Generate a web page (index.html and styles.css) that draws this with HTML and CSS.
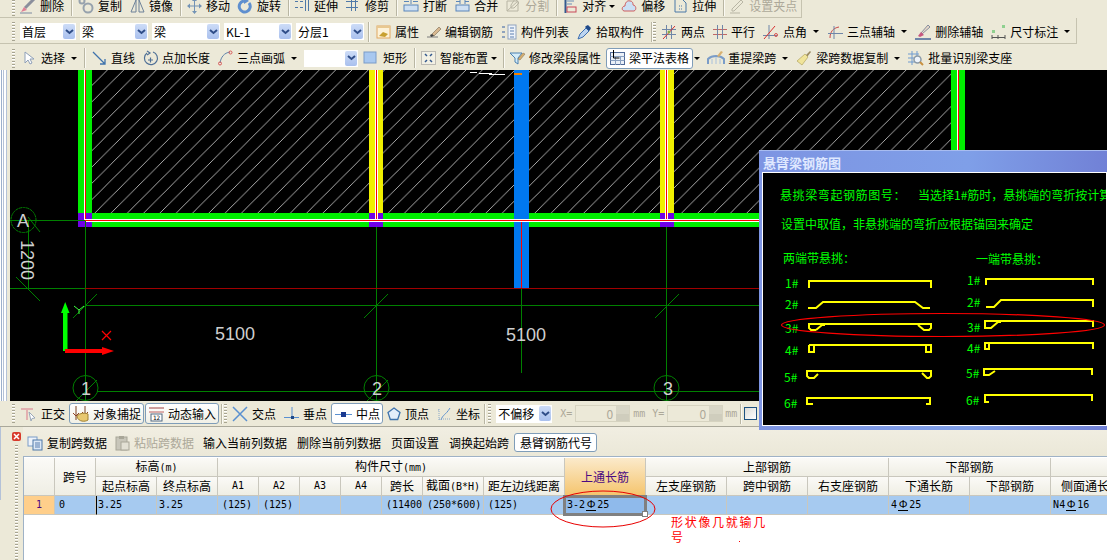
FILE: index.html
```html
<!DOCTYPE html>
<html lang="zh">
<head>
<meta charset="utf-8">
<title>梁平法表格</title>
<link rel="stylesheet" href="styles.css">
</head>
<body>
<div class="tb r1">
  <span class="grip"></span>
  <div class="it"><svg class="ic" width="16" height="16" viewBox="0 0 16 16"><path d="M5 10 14 1" stroke="#8a8f9c" stroke-width="3" fill="none"/><path d="M1 14l3-5 3 3z" fill="#e07f95"/><path d="M0 15h12" stroke="#7d8aa0" fill="none"/></svg>删除</div>
  <span class="sep"></span>
  <div class="it"><svg class="ic" width="16" height="16" viewBox="0 0 16 16" fill="none" stroke="#97a2ad"><circle cx="4" cy="3" r="2.5" stroke-width="2"/><circle cx="10" cy="10" r="4.5" stroke-width="2"/></svg>复制</div>
  <div class="it"><svg class="ic" width="15" height="16" viewBox="0 0 15 16" fill="none" stroke="#6c8098"><path d="M1 14 6 2v12zM9 2l5 12H9z"/></svg>镜像</div>
  <span class="sep"></span>
  <div class="it"><svg class="ic" width="15" height="16" viewBox="0 0 15 16" fill="#7393b5" stroke="#7393b5"><path d="M7.5 3v10M2 8h11" fill="none"/><path d="M7.5 0l2.5 3h-5zM7.5 16l-2.5-3h5zM0 8l3-2.500v5zM15 8l-3-2.500v5z" stroke="none"/></svg>移动</div>
  <div class="it"><svg class="ic" width="15" height="16" viewBox="0 0 15 16" fill="none"><path d="M6 3a5.500 5.500 0 1 0 5 2" stroke="#5f8fcf" stroke-width="3"/><path d="M6 -1v7l5-3z" fill="#5f8fcf"/></svg>旋转</div>
  <span class="sep"></span>
  <div class="it"><svg class="ic" width="15" height="16" viewBox="0 0 15 16" fill="none" stroke="#4e78a8"><path d="M0 3.500h3M5 3.500h3M0 9.500h3M5 9.500h3M10.500 0v13M13.500 0v13"/></svg>延伸</div>
  <div class="it"><svg class="ic" width="15" height="16" viewBox="0 0 15 16" fill="none" stroke="#4e78a8"><path d="M0 3.500h12M0 9.500h12M5.500 0v13M9.500 0v13"/></svg>修剪</div>
  <span class="sep"></span>
  <div class="it"><svg class="ic" width="16" height="16" viewBox="0 0 16 16" fill="none" stroke="#5a86ba"><path d="M1 3.500h5M10 3.500h5M1 10.500h14M8 1v5"/><rect x="1" y="7" width="14" height="6" fill="#cfe0f2"/></svg>打断</div>
  <div class="it"><svg class="ic" width="15" height="16" viewBox="0 0 15 16" fill="none" stroke="#5a86ba"><path d="M1 3.500h4M10 3.500h4M5 1v5M10 1v5"/><rect x="1" y="7" width="13" height="6" fill="#cfe0f2"/></svg>合并</div>
  <div class="it off"><svg class="ic" width="15" height="16" viewBox="0 0 15 16" fill="none" stroke="#b8b5a4"><path d="M1 13V3h11v10zM1 13 12 3M9 1l4 4-5 5H5V7z"/></svg>分割</div>
  <span class="sep"></span>
  <div class="it"><svg class="ic" width="15" height="16" viewBox="0 0 15 16" fill="none"><path d="M2.500 0v15" stroke="#33588e" stroke-width="2"/><path d="M4 3h7M4 6h5" stroke="#6a8fb8"/><rect x="4" y="9" width="9" height="5" stroke="#c84858"/></svg>对齐<span class="caret tight"></span></div>
  <div class="it"><svg class="ic" width="15" height="16" viewBox="0 0 15 16"><path d="M2 13c-3-1-2-5 1-5 0-3 2-6 5-5 3 0 3 3 3 4 3 0 4 5 1 6z" fill="#cbe0f4" stroke="#cf5f5f"/></svg>偏移</div>
  <div class="it"><svg class="ic" width="15" height="16" viewBox="0 0 15 16" fill="none" stroke="#4a78a8"><path d="M2 1h7l4 4v9H2z"/><path d="M6 8h4M6 11h4" stroke-dasharray="1 1"/></svg>拉伸</div>
  <span class="sep"></span>
  <div class="it off"><svg class="ic" width="15" height="16" viewBox="0 0 15 16" fill="none" stroke="#b8b5a4"><path d="M2 11 11 2l2 2-9 9H2zM0 15h10"/></svg>设置夹点</div>
</div>

<div class="tb r2">
  <span class="grip"></span>
  <div class="sel w56"><span class="sv">首层</span><span class="sb"><svg width="9" height="6" viewBox="0 0 9 6"><path d="M1 1l3.500 3L8 1" fill="none" stroke="#2f4d88" stroke-width="2"/></svg></span></div>
  <div class="sel w68"><span class="sv">梁</span><span class="sb"><svg width="9" height="6" viewBox="0 0 9 6"><path d="M1 1l3.500 3L8 1" fill="none" stroke="#2f4d88" stroke-width="2"/></svg></span></div>
  <div class="sel w68"><span class="sv">梁</span><span class="sb"><svg width="9" height="6" viewBox="0 0 9 6"><path d="M1 1l3.500 3L8 1" fill="none" stroke="#2f4d88" stroke-width="2"/></svg></span></div>
  <div class="sel w68"><span class="sv">KL-1</span><span class="sb"><svg width="9" height="6" viewBox="0 0 9 6"><path d="M1 1l3.500 3L8 1" fill="none" stroke="#2f4d88" stroke-width="2"/></svg></span></div>
  <div class="sel w68"><span class="sv">分层1</span><span class="sb"><svg width="9" height="6" viewBox="0 0 9 6"><path d="M1 1l3.500 3L8 1" fill="none" stroke="#2f4d88" stroke-width="2"/></svg></span></div>
  <span class="sep wide"></span>
  <div class="it"><svg class="ic" width="15" height="16" viewBox="0 0 15 16"><rect x="1" y="2" width="13" height="12" fill="#fdf2d8" stroke="#e0a860"/><path d="M1 2h13v2H1z" fill="#e8c890"/><path d="M3 12l4-4 5 2-3 3z" fill="#c8a030"/></svg>属性</div>
  <div class="it"><svg class="ic" width="14" height="16" viewBox="0 0 14 16"><path d="M5 10l7-7 2 2-7 7z" fill="#d8b890" stroke="#7a6a50" stroke-width=".6"/><path d="M0 13h11" stroke="#7a7a7a"/><path d="M3 11l2-1 2 2-3 1z" fill="#404040"/></svg>编辑钢筋</div>
  <div class="it"><svg class="ic" width="16" height="16" viewBox="0 0 16 16"><rect x="1" y="2" width="3" height="2" fill="#8fa3bd"/><rect x="1" y="7" width="3" height="2" fill="#8fa3bd"/><rect x="1" y="12" width="3" height="2" fill="#8fa3bd"/><rect x="7" y="1" width="8" height="14" fill="#eef3fa" stroke="#8fa3bd"/><path d="M9 4h4M9 7h4M9 10h4M9 13h4" stroke="#5a7fb0"/></svg>构件列表</div>
  <div class="it"><svg class="ic" width="15" height="16" viewBox="0 0 15 16"><path d="M1 15l2-5 6-6 3 3-6 6z" fill="#bcd4f0" stroke="#3c6eb0"/><path d="M9 2l2-1 3 3-1 2-1 1-4-4z" fill="#204a88"/></svg>拾取构件</div>
  <span class="sep tightb"></span>
  <span class="grip"></span>
  <div class="it"><svg class="ic" width="16" height="16" viewBox="0 0 16 16" fill="none"><path d="M1 5.500h14M1 10.500h14M5.500 1v14M10.500 1v14" stroke="#6f86a8"/><path d="M2 15 14 2" stroke="#d83030"/><circle cx="8" cy="8" r="1.500" fill="#88a848"/></svg>两点</div>
  <div class="it"><svg class="ic" width="14" height="16" viewBox="0 0 14 16" fill="none"><path d="M0 5.500h14M0 10.500h14" stroke="#c06868"/><path d="M4.500 1v14M9.500 1v14" stroke="#6f86a8"/></svg>平行</div>
  <div class="it"><svg class="ic" width="16" height="16" viewBox="0 0 16 16" fill="none"><path d="M0 11.500h14M6 1v14" stroke="#6f86a8"/><path d="M1 15 12 2" stroke="#d83030"/><circle cx="13" cy="11" r="1.500" stroke="#d85050"/></svg>点角<span class="caret"></span></div>
  <div class="it"><svg class="ic" width="16" height="16" viewBox="0 0 16 16" fill="none"><path d="M3 14C3 8 6 4 12 3" stroke="#c84848"/><path d="M1 9.500h15M7 2v13" stroke="#6f86a8"/></svg>三点辅轴<span class="caret"></span></div>
  <div class="it"><svg class="ic" width="16" height="16" viewBox="0 0 16 16"><path d="M6 9l7-8 2 2-8 7z" fill="#e8d8c8" stroke="#5a6a88" stroke-width=".7"/><path d="M3 12l3-4 3 3-4 2z" fill="#c85880"/><path d="M0 15h16" stroke="#6f86a8" stroke-width="2"/></svg>删除辅轴</div>
  <div class="it"><svg class="ic" width="15" height="16" viewBox="0 0 15 16" fill="none"><rect x="11" y="1" width="3" height="3" fill="#8fd08f"/><rect x="1" y="6" width="3" height="3" fill="#8fd08f"/><path d="M1 11v4M7 11v4M14 11v4M1 13.500h13" stroke="#555"/></svg>尺寸标注<span class="caret"></span></div>
</div>

<div class="tb r3">
  <span class="grip"></span>
  <div class="it"><svg class="ic" width="17" height="16" viewBox="0 0 17 16"><path d="M5 2v11l3-3 2 4 2-1-2-4h4z" fill="#fff" stroke="#8fa0b8"/></svg>选择<span class="caret"></span></div>
  <span class="sep"></span>
  <div class="it"><svg class="ic" width="16" height="16" viewBox="0 0 16 16" fill="none" stroke="#3f73ac" stroke-width="1.300"><path d="M2 2l12 12M9 14h5V9"/></svg>直线</div>
  <div class="it"><svg class="ic" width="15" height="16" viewBox="0 0 15 16" fill="none" stroke="#4f7096" stroke-width="1.200"><path d="M4 3a6.500 6.500 0 1 0 6-1"/><path d="M4 1l3 2-3 2M5 10h5M7.500 7.500v5"/></svg>点加长度</div>
  <div class="it"><svg class="ic" width="15" height="16" viewBox="0 0 15 16" fill="none"><path d="M2 13C3 7 6 3 12 2" stroke="#5f83ab"/><circle cx="12.500" cy="2.500" r="1.500" stroke="#d85858"/><circle cx="2" cy="13.500" r="1.500" stroke="#d85858"/></svg>三点画弧<span class="caret"></span></div>
  <div class="sel w54 gapped"><span class="sv"></span><span class="sb"><svg width="9" height="6" viewBox="0 0 9 6"><path d="M1 1l3.500 3L8 1" fill="none" stroke="#2f4d88" stroke-width="2"/></svg></span></div>
  <div class="it"><svg class="ic" width="16" height="16" viewBox="0 0 16 16"><rect x="1" y="2" width="12" height="11" fill="#a8c8f0" stroke="#7a9cc8"/></svg>矩形</div>
  <span class="sep"></span>
  <div class="it"><svg class="ic" width="15" height="16" viewBox="0 0 15 16" fill="none"><rect x=".5" y="1.500" width="14" height="13" fill="#f2f0e4" stroke="#8a8a8a" stroke-dasharray="1 1"/><path d="M4 4l2 2M11 4 9 6M4 12l2-2M11 12 9 10" stroke="#33588e" stroke-width="1.500"/></svg>智能布置<span class="caret tight"></span></div>
  <span class="sep"></span>
  <div class="it"><svg class="ic" width="15" height="16" viewBox="0 0 15 16"><path d="M0 3h12L8 8v6l-3-2V8z" fill="#d4ecf8" stroke="#4c80b0"/><path d="M8 9l5-6 2 1-5 6z" fill="#d8b070" stroke="#7a6a50" stroke-width=".5"/></svg>修改梁段属性</div>
  <div class="it btn act"><svg class="ic" width="15" height="16" viewBox="0 0 15 16" fill="none"><rect x=".5" y="2.500" width="14" height="12" fill="#eaf0f8" stroke="#506a98"/><path d="M.5 6.500h14M.5 10.500h14M5.500 6v9M10.500 6v9" stroke="#8aa0c0"/><path d="M3.500 0v8h6" stroke="#000"/></svg>梁平法表格</div>
  <span class="caret after"></span>
  <div class="it"><svg class="ic" width="16" height="16" viewBox="0 0 16 16" fill="none"><path d="M0 14V9C4 5 12 5 16 9v5" stroke="#7a9cc8" stroke-width="2"/><path d="M4 14V9M8 14V7M12 14V9" stroke="#a8c0dc"/><path d="M9 6l4-5 2 1-4 5z" fill="#d8b070"/></svg>重提梁跨<span class="caret"></span></div>
  <div class="it"><svg class="ic" width="16" height="16" viewBox="0 0 16 16"><path d="M10 5l4-4 1 1-4 5z" fill="#9a8a60"/><path d="M1 11l8-7 3 3-6 8z" fill="#f0e49a" stroke="#a89850" stroke-width=".6"/></svg>梁跨数据复制<span class="caret"></span></div>
  <div class="it"><svg class="ic" width="16" height="16" viewBox="0 0 16 16" fill="none"><path d="M0 4h11M0 8h9M0 12h7M4 1v14M9 1v6" stroke="#6f9bd0"/><circle cx="9.500" cy="9.500" r="3.500" fill="#eef4fb" stroke="#8a9aa8" stroke-width="1.500"/><path d="M12 12l3 3" stroke="#c89040" stroke-width="2"/></svg>批量识别梁支座</div>
</div>

<div class="work">
  <div class="edge"></div>
  <svg class="cad" width="1097" height="331" viewBox="10 70 1097 331">
    <defs>
      <pattern id="hatch" patternUnits="userSpaceOnUse" width="16.300" height="16.300" patternTransform="translate(14.400 0)">
        <path d="M0 16.300 16.300 0" stroke="#bdbdbd" stroke-width=".9" fill="none"/>
      </pattern>
    </defs>
    <rect x="10" y="70" width="1097" height="331" fill="#000"/>
    <rect x="92" y="70" width="859" height="143" fill="url(#hatch)"/>
    <g shape-rendering="crispEdges">
      <rect x="78" y="70" width="14" height="143" fill="#00ee00"/>
      <rect x="951" y="70" width="14" height="143" fill="#00ee00"/>
      <rect x="369" y="70" width="14" height="143" fill="#f0f000"/>
      <rect x="660" y="70" width="14" height="143" fill="#f0f000"/>
      <rect x="78" y="213" width="887" height="14" fill="#00ee00"/>
      <rect x="514" y="70" width="15" height="218" fill="#0078f0"/>
      <rect x="78" y="213" width="14" height="14" fill="#7000e8"/>
      <rect x="369" y="213" width="14" height="14" fill="#7000e8"/>
      <rect x="660" y="213" width="14" height="14" fill="#7000e8"/>
      <path d="M84.500 70v150M375.500 70v150M377.500 70v150M665.500 70v150M667.500 70v150M957.500 70v150" stroke="#fff" fill="none"/>
      <path d="M85.500 70v150M376.500 70v150M666.500 70v150M958.500 70v150M521.500 221v67" stroke="#f00" fill="none"/>
      <rect x="85" y="219" width="880" height="3" fill="#fff"/>
      <rect x="85" y="220" width="880" height="1" fill="#f00"/>
      <path d="M479 73.500h13M489 74.500h16M470 72.500h7" stroke="#fff" fill="none"/>
      <rect x="514" y="73" width="8" height="2" fill="#f08000"/>
      <path d="M10 220.500h75M10 288.500h75M85.500 221v180M376.500 227v174M666.500 227v174M521.500 288v85M28.500 221v67M85 305.500h675M97 391.500h663" stroke="#008000" fill="none"/>
      <path d="M85 288.500h675" stroke="#a00000" fill="none"/>
    </g>
    <g fill="none" stroke="#008000">
      <path d="M28 217 40 232M16 277l24 24M73 318l24-24M364 318l24-24M655 318l24-24M74 403l23-23M365 403l23-23"/>
      <circle cx="23.500" cy="220" r="12.500" stroke-dasharray="3 .6"/>
      <circle cx="85.500" cy="388" r="12.500"/>
      <circle cx="376.500" cy="388" r="12.500"/>
      <circle cx="666.500" cy="388" r="12.500"/>
    </g>
    <g class="cadt">
      <text x="17" y="227">A</text>
      <text x="215" y="340">5100</text>
      <text x="506" y="341">5100</text>
      <text x="81" y="395">1</text>
      <text x="372" y="395">2</text>
      <text x="663" y="395">3</text>
      <text transform="translate(21 240) rotate(90)">1200</text>
    </g>
    <path d="M74 306l5 4 5-4M79 310v4" fill="none" stroke="#40ff40"/>
    <path d="M102 331l9 9M111 331l-9 9" fill="none" stroke="#f00" stroke-width="1.200"/>
    <rect x="63" y="312" width="4.500" height="39" fill="#00ff00"/>
    <path d="M65.200 302 61 313h8.500z" fill="#00ff00"/>
    <rect x="65" y="349" width="38" height="4" fill="#f00"/>
    <path d="M114 351 102 347v8z" fill="#f00"/>
  </svg>
</div>

<div class="tb bar">
  <span class="grip"></span>
  <div class="it"><svg class="ic" width="17" height="16" viewBox="0 0 17 16"><path d="M1 2h12v2H8v10H6V4H1z" fill="#e3b0b0"/><path d="M9 6l6 6-3 .5-1 2.500z" fill="#fff" stroke="#9aa8b8"/></svg>正交</div>
  <div class="it btn"><svg class="ic" width="16" height="16" viewBox="0 0 16 16"><path d="M3 0v14M12 0v8" stroke="#7a4020" fill="none"/><path d="M0 7l3 3 3-3M9 6l3 3 3-3" stroke="#904020" fill="none"/><path d="M4 11c0-3 7-5 11-3v6c-3 2-9 2-11-3z" fill="#e8c870" stroke="#a08030"/></svg>对象捕捉</div>
  <div class="it btn next"><svg class="ic" width="15" height="16" viewBox="0 0 15 16" fill="none"><path d="M0 2h15" stroke="#a04040"/><path d="M0 6h15" stroke="#c06060"/><rect x="2" y="8" width="11" height="7" fill="#fff" stroke="#506880"/><text class="ict" x="4" y="14">12</text></svg>动态输入</div>
  <span class="sep sb1"></span>
  <span class="grip"></span>
  <div class="it"><svg class="ic" width="16" height="16" viewBox="0 0 16 16" fill="none" stroke="#5a90d0" stroke-width="1.500"><path d="M1 1l14 14M15 1 1 15"/></svg>交点</div>
  <div class="it"><svg class="ic" width="15" height="16" viewBox="0 0 15 16" fill="none" stroke="#5a90d0"><path d="M0 11.500h15M8 1v10"/><rect x="7" y="10" width="3" height="3" fill="#204a88" stroke="none"/></svg>垂点</div>
  <div class="it btn on"><svg class="ic" width="17" height="16" viewBox="0 0 17 16" fill="none"><path d="M0 8.500h17" stroke="#5a90d0"/><rect x="6" y="6" width="5" height="5" fill="#1a3a90"/></svg>中点</div>
  <div class="it"><svg class="ic" width="14" height="16" viewBox="0 0 14 16"><path d="M7 2l6 4.500-2.300 7H3.300L1 6.500z" fill="#e4eefa" stroke="#3f73ac" stroke-width="1.300"/></svg>顶点</div>
  <div class="it"><svg class="ic" width="15" height="16" viewBox="0 0 15 16" fill="none"><path d="M4 14C6 8 8 10 13 2" stroke="#5a90d0"/><path d="M1 4h2M2 3v11M2 13h12" stroke="#8aa8c8" stroke-dasharray="1 1"/></svg>坐标</div>
  <span class="sep flush"></span>
  <span class="grip"></span>
  <div class="sel w56 offs"><span class="sv">不偏移</span><span class="sb"><svg width="9" height="6" viewBox="0 0 9 6"><path d="M1 1l3.500 3L8 1" fill="none" stroke="#2f4d88" stroke-width="2"/></svg></span></div>
  <span class="lab">X=</span>
  <div class="num w55"><span class="nv">0</span><span class="spin"></span></div>
  <span class="mm">mm</span>
  <span class="lab ly">Y=</span>
  <div class="num w56b"><span class="nv">0</span><span class="spin"></span></div>
  <span class="mm m2">mm</span>
  <span class="sep sc"></span>
  <span class="chk"></span>
</div>

<div class="panel">
  <div class="rail">
    <span class="close"><svg width="9" height="9" viewBox="0 0 9 9"><path d="M2 2l5 5M7 2 2 7" stroke="#fff" stroke-width="1.500"/></svg></span>
    <span class="rgrip"></span>
  </div>
  <div class="pmain">
    <div class="ptb">
      <div class="it"><svg class="ic" width="16" height="16" viewBox="0 0 16 16"><rect x="1" y="2" width="9" height="9" fill="#eef3fa" stroke="#7a9cc8"/><rect x="6" y="5" width="9" height="10" fill="#dce8f6" stroke="#4f78a8"/><path d="M8 8h5M8 10h5M8 12h5" stroke="#5a7fb0"/></svg>复制跨数据</div>
      <div class="it off"><svg class="ic" width="15" height="16" viewBox="0 0 15 16"><rect x="1" y="2" width="11" height="13" fill="#c8c6ba" stroke="#a8a698"/><rect x="4" y="1" width="5" height="3" fill="#a8a698"/><rect x="6" y="7" width="8" height="8" fill="#e2e0d4" stroke="#a8a698"/></svg>粘贴跨数据</div>
      <div class="plain">输入当前列数据</div>
      <div class="plain">删除当前列数据</div>
      <div class="plain">页面设置</div>
      <div class="plain">调换起始跨</div>
      <div class="cmd">悬臂钢筋代号</div>
    </div>
    <div class="grid">
      <table>
        <colgroup><col class="c31"><col class="c41"><col class="c61"><col class="c61"><col class="c41"><col class="c41"><col class="c41"><col class="c41"><col class="c41"><col class="c61"><col class="c81"><col class="c81"><col class="c81"><col class="c81"><col class="c81"><col class="c81"><col class="c81"><col class="c81"></colgroup>
        <thead>
          <tr class="h1">
            <th rowspan="2"></th>
            <th rowspan="2">跨号</th>
            <th colspan="2">标高<span class="m">(m)</span></th>
            <th colspan="7">构件尺寸<span class="m">(mm)</span></th>
            <th rowspan="2" class="cur">上通长筋</th>
            <th colspan="3">上部钢筋</th>
            <th colspan="2">下部钢筋</th>
            <th></th>
          </tr>
          <tr class="h2">
            <th>起点标高</th><th>终点标高</th>
            <th class="m">A1</th><th class="m">A2</th><th class="m">A3</th><th class="m">A4</th>
            <th>跨长</th><th>截面<span class="m">(B*H)</span></th><th>距左边线距离</th>
            <th>左支座钢筋</th><th>跨中钢筋</th><th>右支座钢筋</th>
            <th>下通长筋</th><th>下部钢筋</th><th class="lf">侧面通长筋</th>
          </tr>
        </thead>
        <tbody>
          <tr class="d">
            <td class="rowno">1</td>
            <td class="pad">0</td>
            <td class="bl">3.25</td>
            <td>3.25</td>
            <td class="pad">(125)</td>
            <td class="pad">(125)</td>
            <td></td>
            <td></td>
            <td class="pad">(11400)</td>
            <td class="pad">(250*600)</td>
            <td class="pad">(125)</td>
            <td class="active">3-2<span class="rb">Φ</span>25<span class="handle"></span></td>
            <td></td><td></td><td></td>
            <td>4<span class="rb">Φ</span>25</td>
            <td></td>
            <td>N4<span class="rb">Φ</span>16</td>
          </tr>
        </tbody>
      </table>
    </div>
  </div>
</div>

<div class="dlg">
  <div class="dlg-title">悬臂梁钢筋图</div>
  <svg class="dlg-body" width="343" height="252" viewBox="764 173 343 252">
    <rect x="764" y="173" width="343" height="252" fill="#000"/>
    <g class="gt">
      <text class="wide-t" x="781" y="200">悬挑梁弯起钢筋图号：</text>
      <text x="919" y="200">当选择1#筋时，悬挑端的弯折按计算</text>
      <text x="782" y="229">设置中取值，非悬挑端的弯折应根据锚固来确定</text>
      <text x="784" y="263">两端带悬挑：</text>
      <text x="977" y="264">一端带悬挑：</text>
      <text x="786" y="288">1#</text><text x="968" y="285">1#</text>
      <text x="786" y="309">2#</text><text x="968" y="307">2#</text>
      <text x="786" y="333">3#</text><text x="968" y="332">3#</text>
      <text x="786" y="355">4#</text><text x="968" y="353">4#</text>
      <text x="785" y="382">5#</text><text x="967" y="378">5#</text>
      <text x="785" y="408">6#</text><text x="967" y="405">6#</text>
    </g>
    <g fill="none" stroke="#ffff00" stroke-width="2">
      <path d="M810 288v-7h122v7"/>
      <path d="M809 308h8l7-6h92l8 6h7"/>
      <path d="M817 330h-5l-2-2v-4h122v4l-2 2h-5l-6-5M817 330l6-5h3"/>
      <path d="M810 345h122v7h-5v-7M810 345v7h5v-7"/>
      <path d="M819 374l-4 4h-5l-2-2v-5h124v5l-2 2h-2l-5-5"/>
      <path d="M814 404h-6v-6h123v6h-4"/>
      <path d="M987 285v-6h107v6"/>
      <path d="M987 307h8l7-7h92v7"/>
      <path d="M1094 327v-6H986v7h6l7-6h3"/>
      <path d="M1094 349v-6H986v6h4v-6"/>
      <path d="M996 371l-6 4h-5v-6h108v6"/>
      <path d="M990 402h-4v-7h107v6"/>
    </g>
    <ellipse cx="944" cy="325" rx="161.500" ry="11.500" fill="none" stroke="#f00" stroke-width="1.200"/>
  </svg>
</div>

<svg class="ring" width="106" height="40" viewBox="0 0 106 40"><ellipse cx="53" cy="19" rx="52" ry="18" fill="none" stroke="#e80000"/></svg>
<div class="note">形状像几就输几号</div>
<span class="speck"></span>
</body>
</html>
```

FILE: styles.css
```css
* { box-sizing: border-box; }
html, body { margin: 0; height: 100%; }
body {
  position: relative;
  width: 1107px;
  height: 560px;
  overflow: hidden;
  display: flex;
  flex-direction: column;
  background: #ece9d8;
  color: #000;
  font: 12px/16px "Noto Sans CJK SC", "Liberation Sans", sans-serif;
}

/* toolbars */
.tb { display: flex; align-items: center; flex: none; padding-left: 11px; background: #ece9d8; white-space: nowrap; }
.r1 { width: 802px; height: 18px; padding-bottom: 5px; border-right: 1px solid #c6c3b0; border-bottom: 1px solid #c6c3b0; }
.r2 { width: 1077px; height: 26px; padding-top: 2px; border-bottom: 1px solid #c6c3b0; border-right: 1px solid #c6c3b0; }
.r3 { width: 1107px; height: 26px; padding-top: 2px; }
.bar { width: 1107px; height: 26px; border-bottom: 1px solid #aaa89a; }

.grip {
  flex: none;
  width: 3px;
  height: 19px;
  margin: 0 1px;
  background: repeating-linear-gradient(#a7a491 0 1px, #fff 1px 2px, transparent 2px 3px);
}
.sep { flex: none; width: 1px; height: 20px; margin: 0 2px 0 3px; background: #b9b6a3; box-shadow: 1px 0 0 #fbfaf3; }
.sep.wide { margin: 0 3px 0 4px; }
.sep.tightb { margin: 0 0 0 3px; }
.sep.sb1 { margin: 0 1px 0 2px; }
.sep.flush { margin: 0 2px 0 0; }
.sep.sc { margin: 0 3px 0 2px; }

.it { flex: none; display: flex; align-items: center; gap: 4px; padding: 0 4px; height: 16px; }
.ic { flex: none; display: block; overflow: visible; }
.off { color: #aca899; }

.caret { flex: none; width: 0; height: 0; margin-left: 2px; border-style: solid; border-width: 3px 3px 0; border-color: #000 transparent transparent; }
.caret.tight { margin: 0 -1px; }
.caret.after { margin: 0 4px 0 1px; }

/* active toggle buttons */
.btn {
  height: 21px;
  padding: 0 2px 0 3px;
  border: 1px solid #7f9db9;
  border-radius: 3px;
  background: linear-gradient(#fff, #f1f0e6);
}
.btn.next { margin-left: 1px; }
.btn.act { margin-left: 1px; padding-right: 3px; background: #fff; }
.btn.on { padding-right: 2px; background: #fff; }

/* combos */
.sel { flex: none; display: flex; align-items: center; height: 17px; margin-left: 4px; background: #fff; }
.w56 { width: 56px; }
.w68 { width: 68px; }
.w54 { width: 54px; }
.sel.gapped { margin: 0 1px 0 3px; }
.sel.offs { margin: 0 8px 0 4px; height: 18px; }
.sv { flex: 1; padding-left: 2px; overflow: hidden; }
.sb {
  flex: none;
  display: flex;
  align-items: center;
  justify-content: center;
  width: 12px;
  height: 15px;
  margin-right: 1px;
  border-radius: 2px;
  background: linear-gradient(#cddcf7, #a9c0ee);
}

/* status fields */
.lab, .mm { flex: none; font-family: "DejaVu Sans Mono", monospace; font-size: 10px; color: #aca899; }
.lab { width: 15px; }
.lab.ly { margin-left: 7px; }
.mm { width: 12px; margin-left: 3px; white-space: nowrap; }
.mm.m2 { width: 13px; margin-left: 2px; }
.num { flex: none; display: flex; height: 17px; border: 1px solid #d6d3c0; background: #ece9d8; color: #aca899; }
.w55 { width: 55px; }
.w56b { width: 56px; }
.nv { flex: 1; padding-right: 3px; text-align: right; line-height: 15px; }
.spin {
  flex: none;
  width: 13px;
  background: linear-gradient(to bottom, #d8d6c6 0 50%, #cfcdbd 50% 100%);
}
.chk { flex: none; width: 13px; height: 13px; border: 1px solid #1c5180; background: linear-gradient(135deg, #dcdcd7, #fff); }

/* drawing */
.work { flex: none; display: flex; height: 331px; }
.edge {
  flex: none;
  width: 10px;
  background: linear-gradient(90deg, #fff 0 1px, #9db0cc 1px 2px, #fff 2px 3px, #b4c2d8 3px 4px, #fff 4px 6px, #b4c2d8 6px 7px, #ece9d8 7px 10px);
}
.cad { flex: none; display: block; }
.cadt text { font: 18px "Liberation Sans", sans-serif; fill: #cfcfcf; }
.ict { font: 6px "DejaVu Sans Mono", monospace; fill: #000; }

/* lower panel */
.panel { flex: 1; display: flex; min-height: 0; }
.rail {
  position: relative;
  flex: none;
  width: 23px;
  display: flex;
  flex-direction: column;
  align-items: center;
  padding: 5px 0 0 9px;
  background: linear-gradient(90deg, #b4c2d8 0 1px, #ece9d8 1px) no-repeat 0 0 / 3px 73px, #ece9d8;
}
.close { display: block; width: 9px; height: 9px; margin-left: 1px; background: #d83a2c; border-radius: 2px; line-height: 0; }
.rgrip { flex: 1; width: 3px; margin-top: 4px; background: repeating-linear-gradient(#a7a491 0 1px, #fff 1px 2px, transparent 2px 3px); }
.pmain { flex: 1; min-width: 0; display: flex; flex-direction: column; }
.ptb {
  flex: none;
  display: flex;
  align-items: center;
  height: 30px;
  padding-top: 2px;
  border-bottom: 1px solid #9fb2c6;
  background: linear-gradient(#f1eee2, #ebe8d8);
  white-space: nowrap;
}
.plain { flex: none; padding: 0 5px; }
.cmd { flex: none; height: 19px; padding: 0 4px 0 5px; border: 1px solid #7f9db9; border-radius: 3px; background: #fff; line-height: 17px; }

/* table */
.grid { flex: 1; padding-top: 1px; overflow: hidden; border-left: 1px solid #9fb2c6; background: #fff; }
table { width: 1108px; border-collapse: separate; border-spacing: 0; table-layout: fixed; }
.c31 { width: 31px; }
.c41 { width: 41px; }
.c61 { width: 61px; }
.c81 { width: 81px; }
th, td { padding: 0; border-right: 1px solid #c9c7bd; border-bottom: 1px solid #c9c7bd; overflow: hidden; white-space: nowrap; }
th { font-weight: normal; background: linear-gradient(#fbfaf7, #efeee4); }
.h1 th { height: 18px; line-height: 16px; }
.h2 th { height: 19px; line-height: 16px; }
.m { font-family: "DejaVu Sans Mono", monospace; font-size: 10px; }
.lf { text-align: left; padding-left: 10px; }
th.cur { background: linear-gradient(#fbeacb, #f5c46c); color: #4b0a82; border-bottom: 0; }
.d td {
  height: 19px;
  padding-left: 2px;
  line-height: 18px;
  background: #a6caf0;
  font-family: "DejaVu Sans Mono", "Noto Sans CJK SC", monospace;
  font-size: 10px;
}
.d td.pad { padding-left: 4px; }
.d td.bl { border-left: 1px solid #000; padding-left: 1px; }
.d td.rowno { padding: 0; background: #ffcf8b; color: #4b0a82; text-align: center; }
.d td.active { position: relative; overflow: visible; padding-left: 2px; background: #8fbaeb; }
.active::after { content: ""; position: absolute; inset: -1px -2px -2px; border: 3px solid #808080; pointer-events: none; }
.handle { position: absolute; z-index: 1; right: -3px; bottom: -3px; width: 6px; height: 6px; border: 1px solid #808080; background: #fff; }
.rb {
  display: inline-block;
  width: 10px;
  margin: 0 1px;
  border-bottom: 1px solid #000;
  font: 11px/11px "Liberation Sans", sans-serif;
  text-align: center;
}

/* floating dialog */
.dlg {
  position: absolute;
  left: 759px;
  top: 150px;
  width: 348px;
  height: 280px;
  padding-left: 4px;
  background: linear-gradient(90deg, #7d94e2, #7f9fe8 60%, #7181d6);
  border-top: 1px solid #a8bcf0;
}
.dlg-title {
  height: 22px;
  padding: 4px 0 0;
  font-size: 13px;
  line-height: 16px;
  color: #dfe8ff;
  font-weight: bold;
  white-space: nowrap;
}
.dlg-body { display: block; border: 0; outline: 1px solid #fff; }
.gt text { font: 12px "Noto Sans CJK SC", sans-serif; fill: #00ff00; }
.gt .wide-t { letter-spacing: .6px; }

/* hand-drawn notes over the table */
.ring { position: absolute; left: 550px; top: 490px; }
.note {
  position: absolute;
  left: 671px;
  top: 514px;
  width: 100px;
  color: #f00;
  font-size: 12px;
  line-height: 15px;
  letter-spacing: 1.700px;
}
.speck { position: absolute; left: 739px; top: 541px; width: 1px; height: 1px; background: #f00; }
```
